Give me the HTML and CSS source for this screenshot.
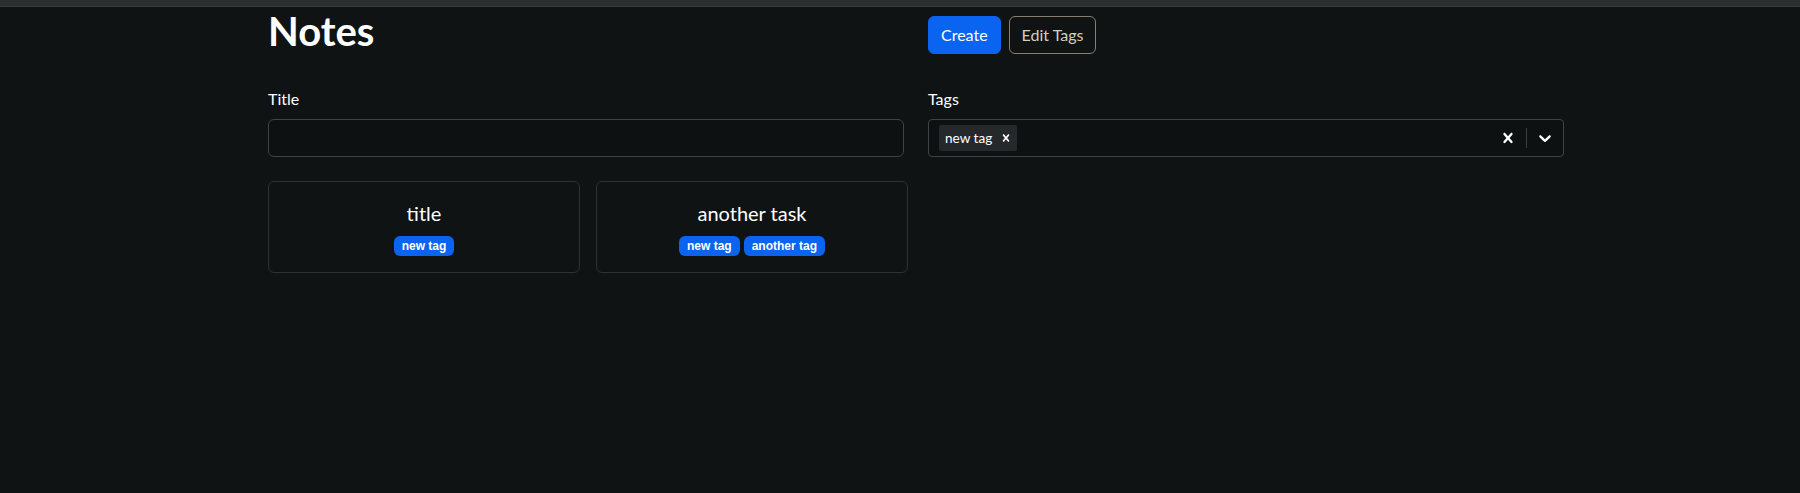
FILE: index.html
```html
<!DOCTYPE html>
<html lang="en">
<head>
<meta charset="utf-8">
<title>Notes</title>
<link rel="stylesheet" href="styles.css">
</head>
<body>
<div class="topbar"></div>
<div class="container">
  <div class="header-row">
    <h1 class="page-title">Notes</h1>
    <div class="actions">
      <button class="btn btn-primary" type="button">Create</button>
      <button class="btn btn-outline" type="button">Edit Tags</button>
    </div>
  </div>
  <form class="filters">
    <div class="field">
      <label class="field-label" for="title">Title</label>
      <input class="text-input" id="title" type="text">
    </div>
    <div class="field">
      <label class="field-label">Tags</label>
      <div class="select">
        <div class="select-values">
          <div class="chip">
            <span class="chip-label">new tag</span>
            <span class="chip-remove"><svg viewBox="0 0 20 20" width="14" height="14"><path fill="currentColor" d="M14.348 14.849c-0.469 0.469-1.229 0.469-1.697 0l-2.651-3.030-2.651 3.029c-0.469 0.469-1.229 0.469-1.697 0-0.469-0.469-0.469-1.229 0-1.697l2.758-3.15-2.759-3.152c-0.469-0.469-0.469-1.228 0-1.697s1.228-0.469 1.697 0l2.652 3.031 2.651-3.031c0.469-0.469 1.228-0.469 1.697 0s0.469 1.229 0 1.697l-2.758 3.152 2.758 3.150c0.469 0.469 0.469 1.229 0 1.698z"/></svg></span>
          </div>
        </div>
        <div class="select-indicators">
          <span class="indicator"><svg viewBox="0 0 20 20" width="20" height="20"><path fill="currentColor" d="M14.348 14.849c-0.469 0.469-1.229 0.469-1.697 0l-2.651-3.030-2.651 3.029c-0.469 0.469-1.229 0.469-1.697 0-0.469-0.469-0.469-1.229 0-1.697l2.758-3.15-2.759-3.152c-0.469-0.469-0.469-1.228 0-1.697s1.228-0.469 1.697 0l2.652 3.031 2.651-3.031c0.469-0.469 1.228-0.469 1.697 0s0.469 1.229 0 1.697l-2.758 3.152 2.758 3.150c0.469 0.469 0.469 1.229 0 1.698z"/></svg></span>
          <span class="separator"></span>
          <span class="indicator"><svg viewBox="0 0 20 20" width="20" height="20"><path fill="currentColor" d="M4.516 7.548c0.436-0.446 1.043-0.481 1.576 0l3.908 3.747 3.908-3.747c0.533-0.481 1.141-0.446 1.574 0 0.436 0.445 0.408 1.197 0 1.615-0.406 0.418-4.695 4.502-4.695 4.502-0.217 0.223-0.502 0.335-0.787 0.335s-0.57-0.112-0.789-0.335c0 0-4.287-4.084-4.695-4.502s-0.436-1.17 0-1.615z"/></svg></span>
        </div>
      </div>
    </div>
  </form>
  <div class="cards">
    <div class="card">
      <div class="card-title">title</div>
      <div class="badges"><span class="badge">new tag</span></div>
    </div>
    <div class="card">
      <div class="card-title">another task</div>
      <div class="badges"><span class="badge">new tag</span><span class="badge">another tag</span></div>
    </div>
  </div>
</div>
</body>
</html>
```
FILE: styles.css
```css
* { box-sizing: border-box; }
html, body { margin: 0; padding: 0; }
body {
  background: #101314;
  color: #e8e6e3;
  font-family: Lato, "Noto Sans", sans-serif;
  font-size: 16px;
  line-height: 1.5;
  height: 493px;
  overflow: hidden;
}
.topbar {
  height: 7px;
  background: #2c2d2e;
  border-bottom: 1px solid #3a3b3c;
}
.container {
  width: 1296px;
  margin-left: 268px;
}
.header-row {
  display: grid;
  grid-template-columns: 1fr 1fr;
  column-gap: 24px;
  align-items: center;
  margin-bottom: 24px;
}
.page-title {
  margin: 0 0 8px;
  font-size: 40px;
  line-height: 48px;
  font-weight: 700;
  color: #fff;
}
.actions { display: flex; gap: 8px; }
.btn {
  font-family: inherit;
  font-size: 16px;
  line-height: 24px;
  padding: 6px 12px;
  border-radius: 6px;
  border: 1px solid transparent;
  cursor: pointer;
}
.btn-primary { background: #0a64f0; border-color: #0a64f0; color: #fff; }
.btn-outline { background: transparent; border-color: #8a7f6f; color: #d6cdbd; }
.filters {
  display: grid;
  grid-template-columns: 1fr 1fr;
  column-gap: 24px;
  margin-bottom: 24px;
}
.field { display: flex; flex-direction: column; }
.field-label { margin-bottom: 8px; line-height: 24px; color: #fff; }
.text-input {
  height: 38px;
  background: #0e1112;
  border: 1px solid #3d4347;
  border-radius: 6px;
  color: #e8e6e3;
  font-family: inherit;
  font-size: 16px;
  padding: 6px 12px;
}
.select {
  height: 38px;
  display: flex;
  align-items: center;
  background: #0e1112;
  border: 1px solid #3d4347;
  border-radius: 4px;
}
.select-values {
  flex: 1;
  display: flex;
  align-items: center;
  padding: 2px 8px;
}
.chip {
  display: flex;
  margin: 2px;
  background: #25292c;
  border-radius: 2px;
}
.chip-label {
  font-size: 13.6px;
  line-height: 20px;
  padding: 3px 3px 3px 6px;
  color: #fff;
}
.chip-remove {
  display: flex;
  align-items: center;
  padding: 0 4px;
  color: #fff;
}
.select-indicators { display: flex; align-items: stretch; align-self: stretch; }
.indicator { display: flex; align-items: center; padding: 8px; color: #fff; }
.separator { width: 1px; margin: 8px 0; background: #3a3f43; }
.cards {
  display: grid;
  grid-template-columns: repeat(4, 312px);
  gap: 16px;
}
.card {
  border: 1px solid #2c3033;
  border-radius: 6px;
  padding: 16px;
  display: flex;
  flex-direction: column;
  align-items: center;
  gap: 8px;
}
.card-title { font-size: 20px; line-height: 30px; color: #fff; }
.badges { display: flex; gap: 4px; }
.badge {
  background: #0a64f0;
  color: #fff;
  font-family: "Liberation Sans", Arial, sans-serif;
  font-size: 12px;
  font-weight: 700;
  line-height: 12px;
  padding: 4px 8px;
  border-radius: 6px;
}
```
